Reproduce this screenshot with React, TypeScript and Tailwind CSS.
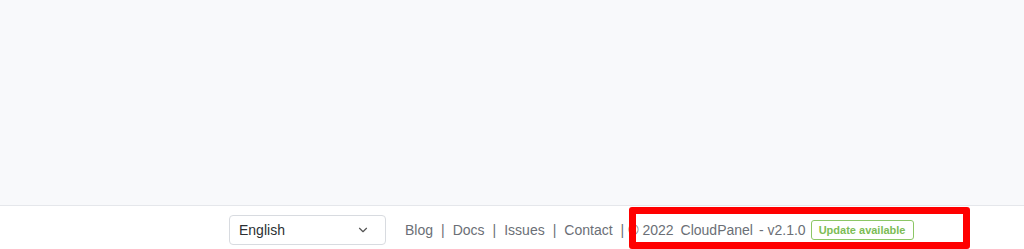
import { ChevronDown } from "lucide-react";

const links = ["Blog", "Docs", "Issues", "Contact"];

function Sep({ last = false }: { last?: boolean }) {
  return (
    <span className={last ? "ml-[8px] mr-[4px] text-[#6b6f76]" : "mx-[8px] text-[#6b6f76]"}>|</span>
  );
}

export default function App() {
  return (
    <div className="relative flex h-[249px] w-full flex-col bg-[#f8f9fb] font-['Liberation_Sans',Arial,sans-serif]">
      <div className="h-[205px]" />
      <footer className="flex h-[44px] items-center border-t border-[#e5e7eb] bg-white pl-[229px] pt-[5px] text-[14px] text-[#6b6f76]">
        <div className="flex h-[30px] w-[157px] items-center justify-between rounded-[4px] border border-[#d8dbe0] bg-white pl-[9px] pr-[15px] text-[#2b2f33]">
          <span>English</span>
          <ChevronDown className="h-[14px] w-[14px] text-[#555]" strokeWidth={2} />
        </div>
        <nav className="ml-[19px] flex items-center">
          {links.map((l, i) => (
            <span key={l} className="flex items-center">
              <a className="cursor-pointer">{l}</a>
              {i < links.length - 1 && <Sep />}
            </span>
          ))}
          <Sep last />
          <span>© 2022</span>
          <span className="ml-[7px]">CloudPanel</span>
          <span className="ml-[6px]">- v2.1.0</span>
          <span className="ml-[5px] flex h-[20px] items-center rounded-[3px] border border-[#8cc665] px-[7px] text-[11px] font-bold text-[#7cbc55]">
            Update available
          </span>
        </nav>
      </footer>
      <div className="pointer-events-none absolute left-[629px] top-[207px] h-[42px] w-[341px] rounded-[3px] border-[7px] border-[#ff0000]" />
    </div>
  );
}
